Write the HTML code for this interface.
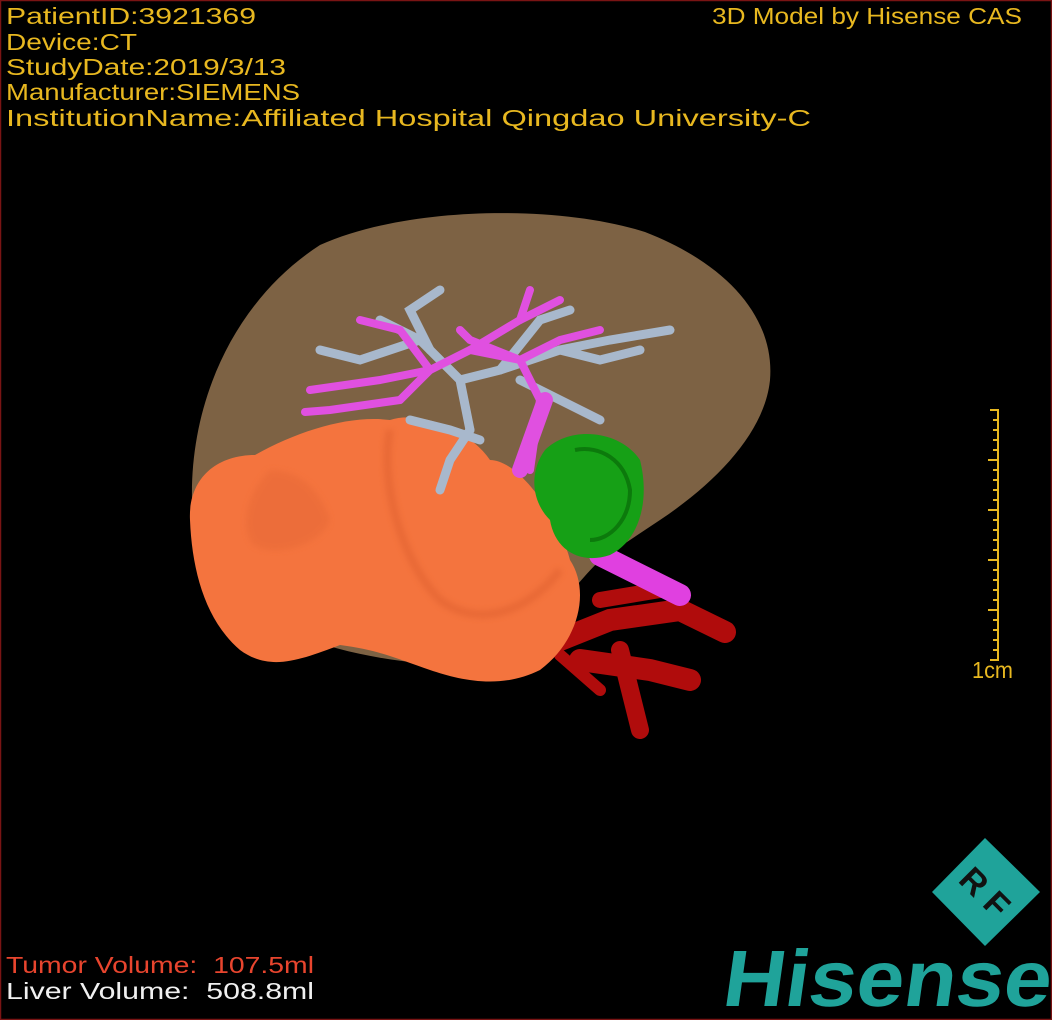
<!DOCTYPE html>
<html><head><meta charset="utf-8"><style>
html,body{margin:0;padding:0;background:#000;}
svg{display:block}
</style></head><body>
<svg width="1052" height="1020" viewBox="0 0 1052 1020" xmlns="http://www.w3.org/2000/svg">
<rect x="0" y="0" width="1052" height="1020" fill="#000"/>
<rect x="0.5" y="0.5" width="1051" height="1019" fill="none" stroke="#7a1414" stroke-width="1.5"/>
<defs>
<filter id="b"><feGaussianBlur stdDeviation="3"/></filter>
</defs>
<!-- liver -->
<path d="M192 500 C190 400 235 300 320 245 C410 205 560 205 645 232 C730 265 775 320 770 380 C765 430 720 480 660 520 L600 560 C560 600 520 665 460 665 C380 665 280 640 230 600 C200 570 193 530 192 500Z" fill="#7d6244"/>
<!-- red vessels -->
<g stroke="#b00c0c" stroke-linecap="round" fill="none">
<path d="M560 640 L610 620 L680 610 L725 632" stroke-width="22"/>
<path d="M600 600 L660 590" stroke-width="16"/>
<path d="M580 660 L650 670 L690 680" stroke-width="22"/>
<path d="M620 650 L640 730" stroke-width="18"/>
<path d="M560 655 L600 690" stroke-width="12"/>
</g>
<!-- magenta trunk -->
<path d="M600 555 L680 595" stroke="#e040e0" stroke-width="22" stroke-linecap="round"/>
<!-- tumor -->
<path d="M190 520 C188 480 215 455 255 455 C300 430 350 415 390 420 C420 410 470 430 490 460 C520 460 560 520 570 560 C590 590 580 640 540 670 C500 690 460 680 430 670 C400 660 380 650 340 645 C300 660 270 672 240 650 C205 620 192 570 190 520Z" fill="#f4743e"/>
<path d="M270 470 C250 490 240 520 250 540 C260 560 320 550 330 520 C320 490 300 470 270 470Z" fill="#e86a38" opacity="0.6" filter="url(#b)"/>
<path d="M390 430 C380 480 400 560 440 600 C480 630 530 610 560 570" fill="none" stroke="#d85a2a" stroke-width="8" opacity="0.4" filter="url(#b)"/>
<!-- gray vessels -->
<g stroke="#a8b8cc" stroke-linecap="round" fill="none" stroke-width="9">
<path d="M470 430 L460 380 L420 340 L380 320"/>
<path d="M460 380 L500 370 L560 350 L610 340 L670 330"/>
<path d="M430 350 L410 310 L440 290"/>
<path d="M500 370 L540 320 L570 310"/>
<path d="M560 350 L600 360 L640 350"/>
<path d="M420 340 L360 360 L320 350"/>
<path d="M470 430 L450 460 L440 490"/>
<path d="M410 420 L450 430 L480 440"/>
<path d="M520 380 L560 400 L600 420"/>
</g>
<!-- magenta vessels -->
<g stroke="#e050e0" stroke-linecap="round" fill="none" stroke-width="8">
<path d="M530 470 L540 400 L520 360 L470 350 L430 370 L400 400"/>
<path d="M470 350 L520 320 L560 300"/>
<path d="M430 370 L380 380 L310 390"/>
<path d="M520 360 L560 340 L600 330"/>
<path d="M430 370 L400 330 L360 320"/>
<path d="M400 400 L330 410 L305 412"/>
<path d="M520 320 L530 290"/>
<path d="M520 360 L470 340 L460 330"/>
</g>
<path d="M545 400 L520 470" stroke="#e050e0" stroke-width="16" stroke-linecap="round"/>
<!-- green -->
<path d="M545 450 C570 425 620 430 640 460 C650 500 640 540 610 555 C580 565 555 550 550 520 C530 500 530 470 545 450Z" fill="#16a016"/>
<path d="M575 450 C600 445 625 460 630 490 C630 520 610 540 590 540" fill="none" stroke="#0c7a0c" stroke-width="4"/>
<!-- scale ruler -->
<g stroke="#e8b820" stroke-width="2" fill="none">
<path d="M990 410 L998 410 L998 660 L990 660"/>
<path d="M993 420h5M993 430h5M993 440h5M993 450h5M988 460h10M993 470h5M993 480h5M993 490h5M993 500h5M988 510h10M993 520h5M993 530h5M993 540h5M993 550h5M988 560h10M993 570h5M993 580h5M993 590h5M993 600h5M988 610h10M993 620h5M993 630h5M993 640h5M993 650h5"/>
</g>
<g font-family="Liberation Sans, sans-serif" font-size="23" fill="#e8b820">
<text x="6" y="24" textLength="250" lengthAdjust="spacingAndGlyphs">PatientID:3921369</text>
<text x="6" y="50" textLength="131" lengthAdjust="spacingAndGlyphs">Device:CT</text>
<text x="6" y="75" textLength="280" lengthAdjust="spacingAndGlyphs">StudyDate:2019/3/13</text>
<text x="6" y="100" textLength="294" lengthAdjust="spacingAndGlyphs">Manufacturer:SIEMENS</text>
<text x="6" y="126" textLength="805" lengthAdjust="spacingAndGlyphs">InstitutionName:Affiliated Hospital Qingdao University-C</text>
<text x="712" y="24" textLength="310" lengthAdjust="spacingAndGlyphs">3D Model by Hisense CAS</text>
<text x="972" y="678" textLength="41" lengthAdjust="spacingAndGlyphs">1cm</text>
</g>
<g font-family="Liberation Sans, sans-serif" font-size="23">
<text x="6" y="973" fill="#e8452e" textLength="308" lengthAdjust="spacingAndGlyphs" xml:space="preserve">Tumor Volume:  107.5ml</text>
<text x="6" y="999" fill="#f0f0f0" textLength="308" lengthAdjust="spacingAndGlyphs" xml:space="preserve">Liver Volume:  508.8ml</text>
</g>
<!-- RF logo -->
<polygon points="985,838 1040,892 985,946 932,892" fill="#1fa39a"/>
<g font-family="Liberation Sans, sans-serif" font-size="34" font-weight="bold" fill="#111" transform="rotate(45 985 892)">
<text x="985" y="904" text-anchor="middle">R F</text>
</g>
<text x="722" y="1006" font-family="Liberation Sans, sans-serif" font-weight="bold" font-size="80" fill="#1fa39a" textLength="328" lengthAdjust="spacingAndGlyphs" transform="skewX(-8) translate(140 0)">Hisense</text>
</svg>
</body></html>
